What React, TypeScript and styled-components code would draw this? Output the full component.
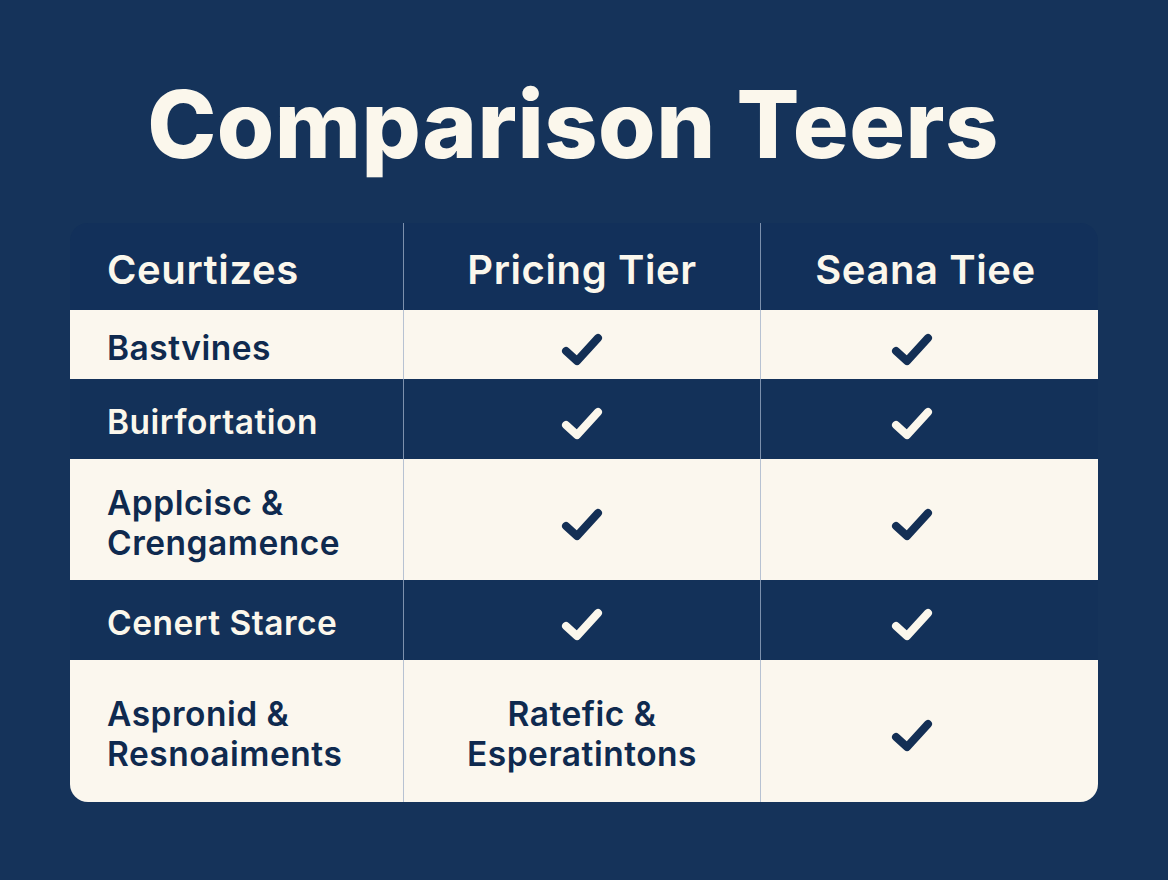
import React from "react";
import styled, { createGlobalStyle } from "styled-components";

const GlobalStyle = createGlobalStyle`
  html, body { margin: 0; padding: 0; }
  body {
    background: #15335a;
    font-family: Inter, "Noto Sans", "Liberation Sans", sans-serif;
  }
`;

const Page = styled.div`
  width: 1168px;
  height: 880px;
  background: #15335a;
  display: flex;
  flex-direction: column;
  align-items: center;
  box-sizing: border-box;
  padding-top: 70px;
`;

const Title = styled.h1`
  margin: 0 22px 0 0;
  height: 153px;
  font-size: 93px;
  line-height: 108px;
  font-weight: 800;
  color: #fbf7ec;
  letter-spacing: 0.5px;
  text-align: center;
`;

const Table = styled.div`
  width: 1028px;
  display: grid;
  grid-template-columns: 333px 357px 338px;
  border-radius: 18px;
  overflow: hidden;
`;

const Cell = styled.div<{ $light: boolean; $h: number; $col: number; $head?: boolean }>`
  height: ${(p) => p.$h}px;
  box-sizing: border-box;
  background: ${(p) => (p.$light ? "#fbf7ee" : p.$head ? "#12305a" : "#133159")};
  color: ${(p) => (p.$light ? "#0f2a4f" : "#fbf7ec")};
  border-left: ${(p) => (p.$col > 0 ? "1px solid rgba(160, 176, 200, 0.75)" : "none")};
  display: flex;
  align-items: center;
  justify-content: ${(p) => (p.$col === 0 ? "flex-start" : "center")};
  padding-top: 6px;
  padding-left: ${(p) => (p.$col === 0 ? "37px" : "0")};
  padding-right: ${(p) => (p.$col === 2 && !p.$head ? "36px" : p.$col === 2 ? "8px" : "0")};
  font-size: ${(p) => (p.$head ? "40px" : "33.5px")};
  font-weight: 600;
  letter-spacing: ${(p) => (p.$head ? "0.6px" : "0.5px")};
  line-height: 40px;
  text-align: ${(p) => (p.$col === 0 ? "left" : "center")};
`;

const Check = ({ color }: { color: string }) => (
  <svg width="44" height="36" viewBox="0 0 44 36" fill="none">
    <path
      d="M6 21 L17 31 L38 8"
      stroke={color}
      strokeWidth="8"
      strokeLinecap="round"
      strokeLinejoin="round"
    />
  </svg>
);

type Val = string | true;
const rows: { label: string[]; h: number; c1: Val; c2: Val }[] = [
  { label: ["Bastvines"], h: 69, c1: true, c2: true },
  { label: ["Buirfortation"], h: 80, c1: true, c2: true },
  { label: ["Applcisc &", "Crengamence"], h: 121, c1: true, c2: true },
  { label: ["Cenert Starce"], h: 80, c1: true, c2: true },
  { label: ["Aspronid &", "Resnoaiments"], h: 142, c1: "Ratefic &\nEsperatintons", c2: true },
];

const Lines = ({ lines }: { lines: string[] }) => (
  <div>
    {lines.map((l, i) => (
      <div key={i}>{l}</div>
    ))}
  </div>
);

export default function App() {
  return (
    <>
      <GlobalStyle />
      <Page>
        <Title>Comparison Teers</Title>
        <Table>
          <Cell $light={false} $h={87} $col={0} $head>Ceurtizes</Cell>
          <Cell $light={false} $h={87} $col={1} $head>Pricing Tier</Cell>
          <Cell $light={false} $h={87} $col={2} $head>Seana Tiee</Cell>
          {rows.map((r, i) => {
            const light = i % 2 === 0;
            const col = light ? "#132f55" : "#fbf7ec";
            return (
              <React.Fragment key={i}>
                <Cell $light={light} $h={r.h} $col={0}>
                  <Lines lines={r.label} />
                </Cell>
                <Cell $light={light} $h={r.h} $col={1}>
                  {r.c1 === true ? <Check color={col} /> : <Lines lines={r.c1.split("\n")} />}
                </Cell>
                <Cell $light={light} $h={r.h} $col={2}>
                  {r.c2 === true ? <Check color={col} /> : <Lines lines={r.c2.split("\n")} />}
                </Cell>
              </React.Fragment>
            );
          })}
        </Table>
      </Page>
    </>
  );
}
